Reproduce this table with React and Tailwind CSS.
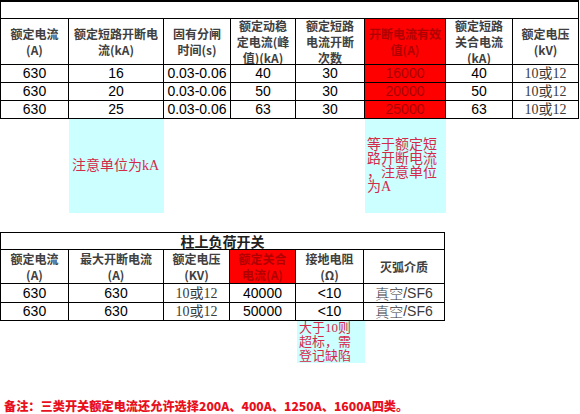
import React from "react";

const SANS = "font-['Liberation_Sans','Noto_Sans_CJK_SC',sans-serif]";
const SERIF = "font-['Liberation_Serif','Noto_Sans_CJK_SC',serif]";
const CJK = "font-['Noto_Sans_CJK_SC',sans-serif]";

const cols1 = "grid-cols-[68px_95px_67px_65px_69px_81px_67px_66px]";
const cols2 = "grid-cols-[68px_95px_66px_66px_68px_81px]";

const headers1 = [
  ["额定电流", "(A)"],
  ["额定短路开断电", "流(kA)"],
  ["固有分闸", "时间(s)"],
  ["额定动稳", "定电流(峰", "值)(kA)"],
  ["额定短路", "电流开断", "次数"],
  ["开断电流有效", "值(A)"],
  ["额定短路", "关合电流", "(kA)"],
  ["额定电压", "(kV)"],
];

const rows1 = [
  ["630", "16", "0.03-0.06", "40", "30", "16000", "40", "10或12"],
  ["630", "20", "0.03-0.06", "50", "30", "20000", "50", "10或12"],
  ["630", "25", "0.03-0.06", "63", "30", "25000", "63", "10或12"],
];

const headers2 = [
  ["额定电流", "(A)"],
  ["最大开断电流", "(A)"],
  ["额定电压", "(KV)"],
  ["额定关合", "电流(A)"],
  ["接地电阻", "(Ω)"],
  ["灭弧介质"],
];

const rows2 = [
  ["630", "630", "10或12", "40000", "<10", "真空/SF6"],
  ["630", "630", "10或12", "50000", "<10", "真空/SF6"],
];

function HeadCell({ lines, red }) {
  return (
    <div
      className={`border-r border-b border-black overflow-hidden flex flex-col items-center justify-center text-center text-[12px] leading-[16px] font-bold ${CJK} ${
        red ? "bg-[#ff0000] text-[#b00000]" : "text-[#404040]"
      }`}
    >
      {lines.map((l, i) => (
        <div key={i} className="whitespace-nowrap">
          {l}
        </div>
      ))}
    </div>
  );
}

function DataCell({ value, red }) {
  const serif = value.includes("或") || value.includes("真空");
  return (
    <div
      className={`border-r border-b border-black flex items-center justify-center text-[14px] leading-[17px] whitespace-nowrap ${
        serif ? `${SERIF} text-[#3a3a3a]` : SANS
      } ${red ? "bg-[#ff0000] text-[#a80000]" : serif ? "" : "text-black"}`}
    >
      {value.includes("真空") ? (
        <>
          <span className={CJK + " font-light"}>真空</span>
          <span className={SANS}>/SF6</span>
        </>
      ) : (
        value
      )}
    </div>
  );
}

export default function App() {
  return (
    <div className="w-[580px] h-[414px] bg-white overflow-hidden">
      {/* 断路器参数表 */}
      <div
        className={`grid ${cols1} grid-rows-[17px_46px_18px_18px_18px] w-[579px] border-l border-t-2 border-black`}
      >
        <div className="col-span-8 border-r border-b border-black" />
        {headers1.map((h, i) => (
          <HeadCell key={i} lines={h} red={i === 5} />
        ))}
        {rows1.map((r, ri) =>
          r.map((v, ci) => <DataCell key={ri + "-" + ci} value={v} red={ci === 5} />)
        )}
      </div>

      {/* 备注色块 */}
      <div className={`grid ${cols1} h-[94px] pl-px`}>
        <div />
        <div
          className={`bg-[#ccffff] flex items-center pl-[3px] text-[14px] leading-[16px] text-[#d42a4a] ${SERIF}`}
        >
          注意单位为kA
        </div>
        <div />
        <div />
        <div />
        <div
          className={`bg-[#ccffff] flex flex-col justify-center pl-[2px] text-[14px] leading-[14px] text-[#d42a4a] ${SERIF}`}
        >
          <div>等于额定短</div>
          <div>路开断电流</div>
          <div>，注意单位</div>
          <div>为A</div>
        </div>
      </div>

      <div className="h-[19px]" />

      {/* 柱上负荷开关 */}
      <div
        className={`grid ${cols2} grid-rows-[17px_34px_19px_18px] w-[445px] border-l border-t border-black`}
      >
        <div
          className={`col-span-6 border-r border-b border-black flex items-center justify-center text-[14px] font-bold text-[#222] ${CJK}`}
        >
          柱上负荷开关
        </div>
        {headers2.map((h, i) => (
          <HeadCell key={i} lines={h} red={i === 3} />
        ))}
        {rows2.map((r, ri) =>
          r.map((v, ci) => <DataCell key={ri + "-" + ci} value={v} />)
        )}
      </div>

      <div className={`grid ${cols2} h-[42px] pl-[2px]`}>
        <div />
        <div />
        <div />
        <div />
        <div
          className={`bg-[#ccffff] flex flex-col justify-center pl-[2px] text-[13px] leading-[14px] text-[#d42a4a] ${SERIF}`}
        >
          <div>大于10则</div>
          <div>超标，需</div>
          <div>登记缺陷</div>
        </div>
      </div>

      <div
        className={`mt-[35px] pl-[4px] text-[12.2px] leading-[16px] font-extrabold text-[#e8101c] whitespace-nowrap ${CJK}`}
      >
        备注：三类开关额定电流还允许选择200A、400A、1250A、1600A四类。
      </div>
    </div>
  );
}
